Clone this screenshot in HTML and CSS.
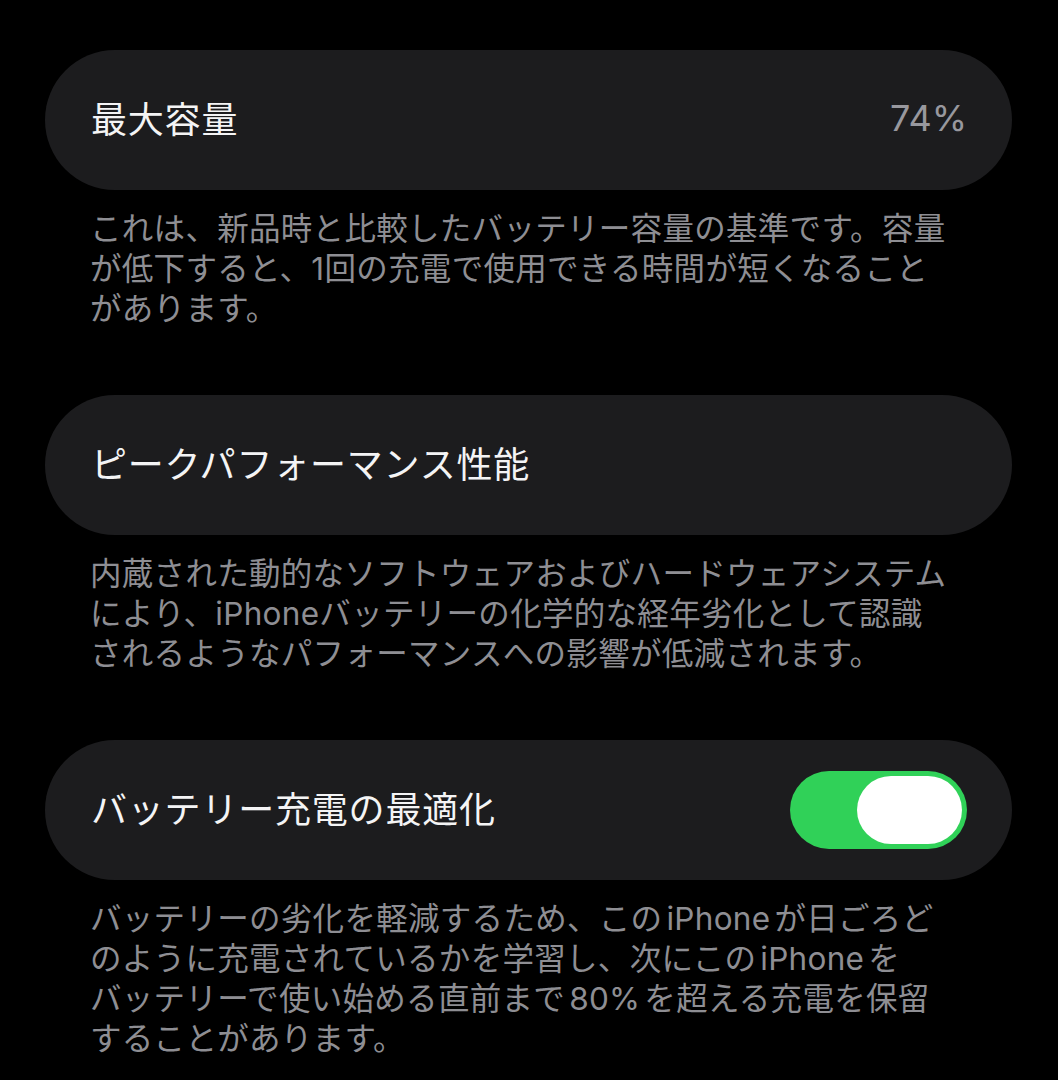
FILE: index.html
```html
<!DOCTYPE html>
<html lang="ja">
<head>
<meta charset="utf-8">
<title>バッテリーの状態</title>
<link rel="stylesheet" href="styles.css">
</head>
<body>
<main class="settings">
  <section class="group">
    <div class="cell">
      <span class="cell-title">最大容量</span>
      <span class="cell-value">74%</span>
    </div>
    <p class="footer">これは、新品時と比較したバッテリー容量の基準です。容量<br>が低下すると、1回の充電で使用できる時間が短くなること<br>があります。</p>
  </section>
  <section class="group">
    <div class="cell">
      <span class="cell-title">ピークパフォーマンス性能</span>
    </div>
    <p class="footer">内蔵された動的なソフトウェアおよびハードウェアシステム<br>により、iPhoneバッテリーの化学的な経年劣化として認識<br>されるようなパフォーマンスへの影響が低減されます。</p>
  </section>
  <section class="group">
    <div class="cell">
      <span class="cell-title">バッテリー充電の最適化</span>
      <span class="toggle on" role="switch" aria-checked="true"><span class="knob"></span></span>
    </div>
    <p class="footer">バッテリーの劣化を軽減するため、この<span class="latin">iPhone</span>が日ごろど<br>のように充電されているかを学習し、次にこの<span class="latin">iPhone</span>を<br>バッテリーで使い始める直前まで<span class="latin">80%</span>を超える充電を保留<br>することがあります。</p>
  </section>
</main>
</body>
</html>
```

FILE: styles.css
```css
html, body {
  margin: 0;
  padding: 0;
  background: #000;
}

body {
  font-family: Inter, "Noto Sans CJK JP", sans-serif;
  color: #f4f4f5;
  -webkit-font-smoothing: antialiased;
}

.settings {
  padding: 50px 46px 0 45px;
}

.group {
  margin-bottom: 66px;
}

.cell {
  height: 140px;
  box-sizing: border-box;
  border-radius: 70px;
  background: #1c1c1e;
  display: flex;
  align-items: center;
  justify-content: space-between;
  padding: 0 45px 0 46px;
}

.cell-title {
  font-size: 36px;
  letter-spacing: 0.8px;
  color: #f4f4f5;
  margin-bottom: 6px;
}

.cell-value {
  font-size: 36px;
  color: #98989e;
  margin-bottom: 4px;
}

.toggle {
  width: 177px;
  height: 78px;
  border-radius: 39px;
  background: #30d158;
  display: flex;
  align-items: center;
  justify-content: flex-end;
  padding: 0 5px;
  box-sizing: border-box;
}

.knob {
  width: 105px;
  height: 68px;
  border-radius: 34px;
  background: #fff;
}

.footer {
  margin: 19px 0 0 45px;
  white-space: nowrap;
  font-size: 31.5px;
  line-height: 40px;
  letter-spacing: 0.3px;
  color: #8e8e93;
}

.footer .latin {
  margin: 0 4px;
}
```
